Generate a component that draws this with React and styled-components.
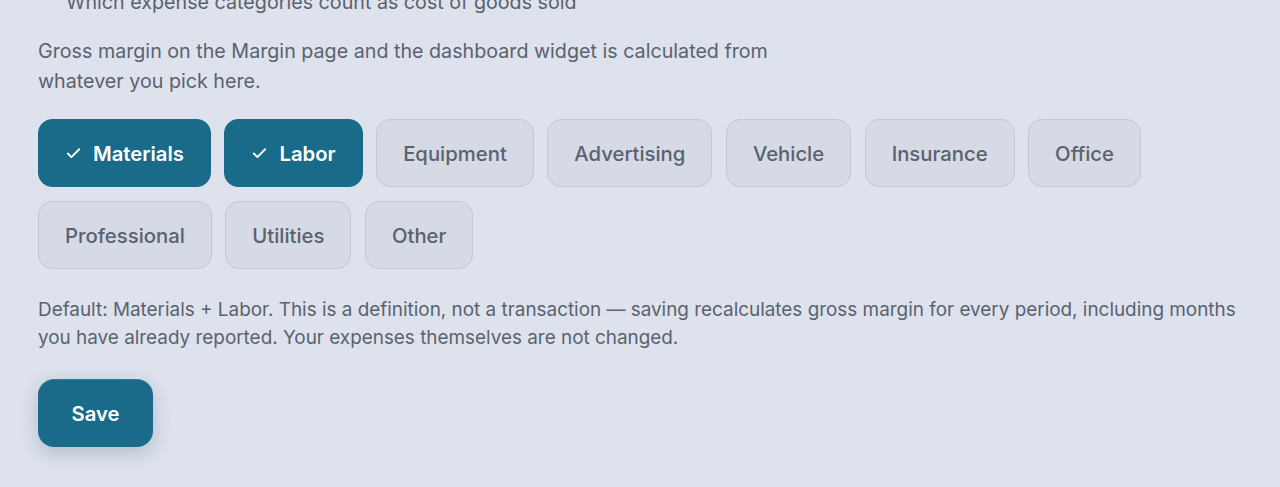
import styled, { createGlobalStyle } from "styled-components";
import { Check } from "lucide-react";

const GlobalStyle = createGlobalStyle`
  html, body {
    margin: 0;
    padding: 0;
    background: #dde2ec;
    overflow: hidden;
  }
  body {
    font-family: Inter, "Liberation Sans", sans-serif;
    -webkit-font-smoothing: antialiased;
  }
`;

const categories = [
  { name: "Materials", selected: true },
  { name: "Labor", selected: true },
  { name: "Equipment" },
  { name: "Advertising" },
  { name: "Vehicle" },
  { name: "Insurance" },
  { name: "Office" },
  { name: "Professional" },
  { name: "Utilities" },
  { name: "Other" },
];

// settings-section
const Section = styled.section`
  padding: 0 38px;
  height: 487px;
  box-sizing: border-box;
`;

const Title = styled.h3`
  margin: -12px 0 0 0;
  padding-left: 28px;
  font-size: 19.7px;
  line-height: 28px;
  font-weight: 400;
  color: #5a6270;
`;

const Lead = styled.p`
  margin: 20px 0 0 0;
  max-width: 760px;
  font-size: 19.7px;
  line-height: 30px;
  color: #5a6270;
`;

// chip-list
const ChipList = styled.div`
  display: flex;
  flex-wrap: wrap;
  gap: 14px 13.5px;
  margin-top: 23px;
`;

const Chip = styled.button`
  display: inline-flex;
  align-items: center;
  gap: 11px;
  height: 68px;
  padding: 1px 26px 0;
  box-sizing: border-box;
  border-radius: 14px;
  font-family: inherit;
  font-size: 20.3px;
  cursor: pointer;
  background: ${(p) => (p.$selected ? "#1a6b8a" : "#d5dae4")};
  color: ${(p) => (p.$selected ? "#ffffff" : "#5a6270")};
  font-weight: ${(p) => (p.$selected ? 600 : 500)};
  border: 1.5px solid ${(p) => (p.$selected ? "#1a6b8a" : "#c3c8d2")};
`;

const Note = styled.p`
  margin: 27px 0 0 0;
  font-size: 18.9px;
  line-height: 28px;
  color: #5a6270;
`;

const SaveButton = styled.button`
  margin-top: 27px;
  width: 115px;
  height: 68px;
  padding-top: 1px;
  border: none;
  border-radius: 16px;
  background: #1a6b8a;
  color: #ffffff;
  font-family: inherit;
  font-size: 20.3px;
  font-weight: 600;
  cursor: pointer;
  box-shadow: 0 6px 18px rgba(30, 60, 90, 0.22), inset 0 1px 0 rgba(255, 255, 255, 0.12);
`;

export default function App() {
  return (
    <>
      <GlobalStyle />
      <Section>
        <Title>Which expense categories count as cost of goods sold</Title>
        <Lead>
          Gross margin on the Margin page and the dashboard widget is calculated
          from whatever you pick here.
        </Lead>
        <ChipList>
          {categories.map((c) => (
            <Chip key={c.name} $selected={c.selected}>
              {c.selected && <Check size={17} strokeWidth={2.6} />}
              {c.name}
            </Chip>
          ))}
        </ChipList>
        <Note>
          Default: Materials + Labor. This is a definition, not a transaction —
          saving recalculates gross margin for every period, including months you
          have already reported. Your expenses themselves are not changed.
        </Note>
        <SaveButton>Save</SaveButton>
      </Section>
    </>
  );
}
